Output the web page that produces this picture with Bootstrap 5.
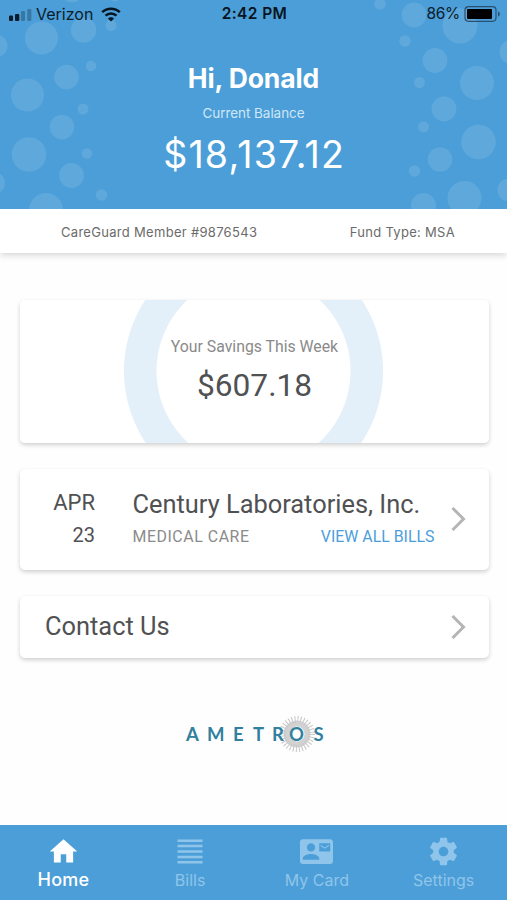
<!DOCTYPE html>
<html lang="en">
<head>
<meta charset="utf-8">
<meta name="viewport" content="width=device-width, initial-scale=1">
<title>Account Home</title>
<link href="https://cdn.jsdelivr.net/npm/bootstrap@5.3.0/dist/css/bootstrap.min.css" rel="stylesheet">
<style>
  body { font-family: Inter, "Liberation Sans", sans-serif; background: #fefefe; color: #505153; }
  .app-screen { height: 900px; }
  .hero { height: 209px; background: #4c9ed8; }
  .bubbles { position: absolute; inset: 0; }
  .status { height: 28px; padding: 0 5px 0 8px; color: #0b1d2b; font-size: 16px; line-height: 28px; }
  .status-time { font-size: 15.5px; letter-spacing: .4px; color: #071521; padding-right: 1px; }
  .status-pct { font-size: 15.5px; letter-spacing: -.3px; }
  .greeting { font-size: 26.5px; line-height: 32px; margin-top: 34px; letter-spacing: -.1px; }
  .bal-label { font-size: 13.5px; line-height: 20px; margin-top: 9px; color: #cfe6f6; letter-spacing: -.05px; }
  .bal-amount { font-size: 37.5px; line-height: 44px; margin-top: 10px; letter-spacing: 1.2px; margin-right: -1.2px; }
  .member-bar { height: 44px; font-size: 13px; color: #6b6b6b; padding: 3px 52px 0 61px; letter-spacing: .3px; box-shadow: 0 2px 7px rgba(0,0,0,.17); }
  .tiles { font-family: Roboto, "Liberation Sans", sans-serif; padding: 47px 18px 0 20px; gap: 26px; }
  .tile { border: 0; border-radius: 5px; box-shadow: 0 2px 4px rgba(0,0,0,.19); }
  .savings { height: 143px; padding-top: 36px; background: radial-gradient(circle at 233.5px 71px, #fff 96.5px, #e3eff9 97.5px, #e3eff9 129px, #fff 130px); }
  .savings-label { font-size: 15.8px; line-height: 22px; color: #8a8a8a; letter-spacing: 0; }
  .savings-sum { font-size: 31.7px; line-height: 40px; margin-top: 8px; }
  .bill { height: 101px; padding: 0 23px 2px 25px; }
  .bill-date { width: 50px; font-size: 22px; line-height: 32px; }
  .bill-date small { font-size: 20px; }
  .bill-main { margin-left: 37.5px; width: 302px; }
  .tile-title { font-size: 25.4px; line-height: 32px; }
  .bill-meta { font-size: 15.9px; line-height: 24px; margin-top: 5px; color: #8b8b8b; }
  .bill-kind { letter-spacing: .55px; }
  .bill-meta a { color: #4c9edb; }
  .contact { height: 62px; padding: 0 23px 0 25px; }
  .contact .tile-title { margin-top: -3px; }
  .brand-name { font: 700 18.5px Lato, "Liberation Sans", sans-serif; fill: #31809f; }
  .tabs { height: 75px; background: #4c9ed8; }
  .tab { color: #8fc5ea; font-size: 16px; padding-top: 10px; }
  .tab svg { height: 33px; display: block; }
  .tab span { line-height: 24px; }
  .tab.on { color: #fff; font-size: 18px; font-weight: 500; letter-spacing: .2px; }
</style>
<script src="https://cdn.jsdelivr.net/npm/bootstrap@5.3.0/dist/js/bootstrap.bundle.min.js"></script>
</head>
<body>
<div class="app-screen d-flex flex-column overflow-hidden">
  <header class="hero position-relative overflow-hidden flex-shrink-0">
    <svg class="bubbles" width="507" height="209" fill="#fff" fill-opacity=".11" aria-hidden="true">
      <circle cx="41.5" cy="38" r="16.5"/><circle cx="83.5" cy="30" r="12.7"/><circle cx="111" cy="25.5" r="5.5"/><circle cx="-3.5" cy="46" r="11"/><circle cx="91" cy="66" r="5.2"/><circle cx="66.5" cy="77" r="12.3"/><circle cx="27.5" cy="95" r="16.5"/><circle cx="83" cy="109" r="5.5"/><circle cx="62" cy="127" r="12.3"/><circle cx="29" cy="154.5" r="17.3"/><circle cx="87" cy="153.5" r="5.2"/><circle cx="71.5" cy="175.5" r="12.4"/><circle cx="101.5" cy="195" r="5.8"/><circle cx="46" cy="210" r="17"/><circle cx="-6" cy="183" r="11"/><circle cx="72" cy="-9" r="11.5"/><circle cx="115" cy="-4" r="5.5"/>
      <circle cx="380" cy="4" r="5.8"/><circle cx="414" cy="15" r="12.4"/><circle cx="460" cy="26" r="17.5"/><circle cx="405" cy="41" r="5.8"/><circle cx="435" cy="60.5" r="12.4"/><circle cx="511.5" cy="52" r="12"/><circle cx="419.5" cy="82.5" r="5.5"/><circle cx="477" cy="83" r="17"/><circle cx="444" cy="109" r="12.4"/><circle cx="423.5" cy="127" r="5.5"/><circle cx="478.5" cy="142" r="17.3"/><circle cx="440" cy="159.5" r="12.2"/><circle cx="414.5" cy="171" r="5.8"/><circle cx="464.5" cy="198" r="17"/><circle cx="423.5" cy="205.5" r="12.5"/><circle cx="509" cy="190" r="11.5"/>
    </svg>
    <div class="status position-relative row g-0">
      <div class="col d-flex align-items-center">
        <svg width="24" height="13" fill="#0b1d2b" class="me-1" aria-hidden="true"><rect x="1" y="7.5" width="4" height="5.5" rx="1"/><rect x="7" y="6" width="4.3" height="7" rx="1"/><rect x="13" y="3" width="4" height="10" rx="1" opacity=".3"/><rect x="19.3" y="1" width="4" height="12" rx="1" opacity=".3"/></svg>
        <span>Verizon</span>
        <svg class="ms-2" width="20" height="15" viewBox="0 0 20 15" fill="none" stroke="#071521" stroke-width="2.5" aria-hidden="true"><path d="M1.200 5.200C6 .5 14 .5 18.800 5.200M4.500 8.600c3.200-2.900 7.800-2.900 11 0"/><path d="M10 14.500 6.900 11.500c1.800-1.700 4.400-1.700 6.200 0z" fill="#071521" stroke="none"/></svg>
      </div>
      <div class="col-auto fw-semibold status-time">2:42 PM</div>
      <div class="col d-flex align-items-center justify-content-end">
        <span class="status-pct">86%</span>
        <svg class="ms-1" width="38" height="16" aria-hidden="true"><rect x="1" y=".7" width="31" height="14.6" rx="3.5" fill="none" stroke="#29516f" stroke-width="1.2"/><rect x="3" y="3" width="25" height="10" rx="1" fill="#000"/><path d="M34 5.500c2.400.6 2.400 4.400 0 5z" fill="#29516f"/></svg>
      </div>
    </div>
    <div class="position-relative text-center text-white">
      <div class="greeting fw-bold">Hi, Donald</div>
      <div class="bal-label">Current Balance</div>
      <div class="bal-amount">$18,137.12</div>
    </div>
  </header>

  <div class="member-bar bg-white d-flex align-items-center justify-content-between flex-shrink-0">
    <span>CareGuard Member #9876543</span><span>Fund Type: MSA</span>
  </div>

  <main class="tiles d-flex flex-column flex-grow-1">
    <section class="card tile savings text-center">
      <div class="savings-label">Your Savings This Week</div>
      <div class="savings-sum">$607.18</div>
    </section>
    <section class="card tile bill flex-row align-items-center">
      <div class="bill-date text-end">APR<br><small>23</small></div>
      <div class="bill-main">
        <div class="tile-title text-nowrap">Century Laboratories, Inc.</div>
        <div class="bill-meta d-flex justify-content-between"><span class="bill-kind">MEDICAL CARE</span><a href="#" class="text-decoration-none">VIEW ALL BILLS</a></div>
      </div>
      <svg class="ms-auto" width="15" height="24" fill="none" stroke="#b5b5b5" stroke-width="3" aria-hidden="true"><path d="m1.500 1 11 11-11 11"/></svg>
    </section>
    <section class="card tile contact flex-row align-items-center">
      <div class="tile-title">Contact Us</div>
      <svg class="ms-auto" width="15" height="24" fill="none" stroke="#b5b5b5" stroke-width="3" aria-hidden="true"><path d="m1.500 1 11 11-11 11"/></svg>
    </section>
  </main>

  <div class="d-flex justify-content-center flex-shrink-0" style="height:111px">
    <svg width="150" height="40" viewBox="0 0 150 40" aria-label="Ametros">
      <circle cx="118" cy="20" r="10.5" fill="none" stroke="#d2d2d2" stroke-width="6"/>
      <circle cx="118" cy="20" r="14.5" fill="none" stroke="#c4c4c4" stroke-width="7" stroke-dasharray=".9 1.95"/>
      <text class="brand-name" x="7 28 54 74 93 110 134.5" y="27">AMETROS</text>
    </svg>
  </div>

  <nav class="tabs row g-0 flex-shrink-0">
    <div class="col tab on d-flex flex-column align-items-center">
      <svg width="33" viewBox="0 0 24 24" fill="currentColor"><path d="M10 20v-6h4v6h5v-8h3L12 3 2 12h3v8z"/></svg><span>Home</span>
    </div>
    <div class="col tab d-flex flex-column align-items-center">
      <svg width="26" viewBox="0 0 26 33" fill="none" stroke="currentColor" stroke-width="2.5"><path d="M.5 5.700h25M.5 11.100h25M.5 16.500h25M.5 21.900h25M.5 27.300h25"/></svg><span>Bills</span>
    </div>
    <div class="col tab d-flex flex-column align-items-center">
      <svg width="33" viewBox="0 0 24 24" fill="currentColor"><path d="M21 8V7l-3 2-3-2v1l3 2 3-2zm1-5H2C.9 3 0 3.900 0 5v14c0 1.100.9 2 2 2h20c1.100 0 1.990-.9 1.990-2L24 5c0-1.100-.9-2-2-2zM8 6c1.660 0 3 1.340 3 3s-1.340 3-3 3-3-1.340-3-3 1.340-3 3-3zm6 12H2v-1c0-2 4-3.100 6-3.100s6 1.100 6 3.100v1zm8-6h-8V6h8v6z"/></svg><span>My Card</span>
    </div>
    <div class="col tab d-flex flex-column align-items-center">
      <svg width="33" viewBox="0 0 24 24" fill="currentColor"><path d="M19.430 12.980c.04-.32.070-.64.070-.98s-.03-.66-.07-.98l2.110-1.650c.19-.15.240-.42.120-.64l-2-3.460c-.12-.22-.39-.3-.61-.22l-2.490 1c-.52-.4-1.080-.73-1.690-.98l-.38-2.650C14.460 2.180 14.250 2 14 2h-4c-.25 0-.46.180-.49.420l-.38 2.650c-.61.250-1.170.590-1.690.98l-2.490-1c-.23-.09-.49 0-.61.220l-2 3.460c-.13.220-.07.490.12.640l2.110 1.650c-.04.320-.07.650-.07.980s.03.660.070.980l-2.110 1.650c-.19.150-.24.420-.12.640l2 3.460c.12.220.39.300.61.220l2.490-1c.52.400 1.080.730 1.690.980l.38 2.650c.03.240.24.420.49.420h4c.25 0 .46-.18.490-.42l.38-2.650c.61-.25 1.170-.59 1.690-.98l2.490 1c.23.090.49 0 .61-.22l2-3.460c.12-.22.070-.49-.12-.64l-2.110-1.650zM12 15.500c-1.930 0-3.500-1.570-3.500-3.500s1.570-3.500 3.500-3.500 3.500 1.570 3.500 3.500-1.570 3.500-3.500 3.500z"/></svg><span>Settings</span>
    </div>
  </nav>
</div>
</body>
</html>
